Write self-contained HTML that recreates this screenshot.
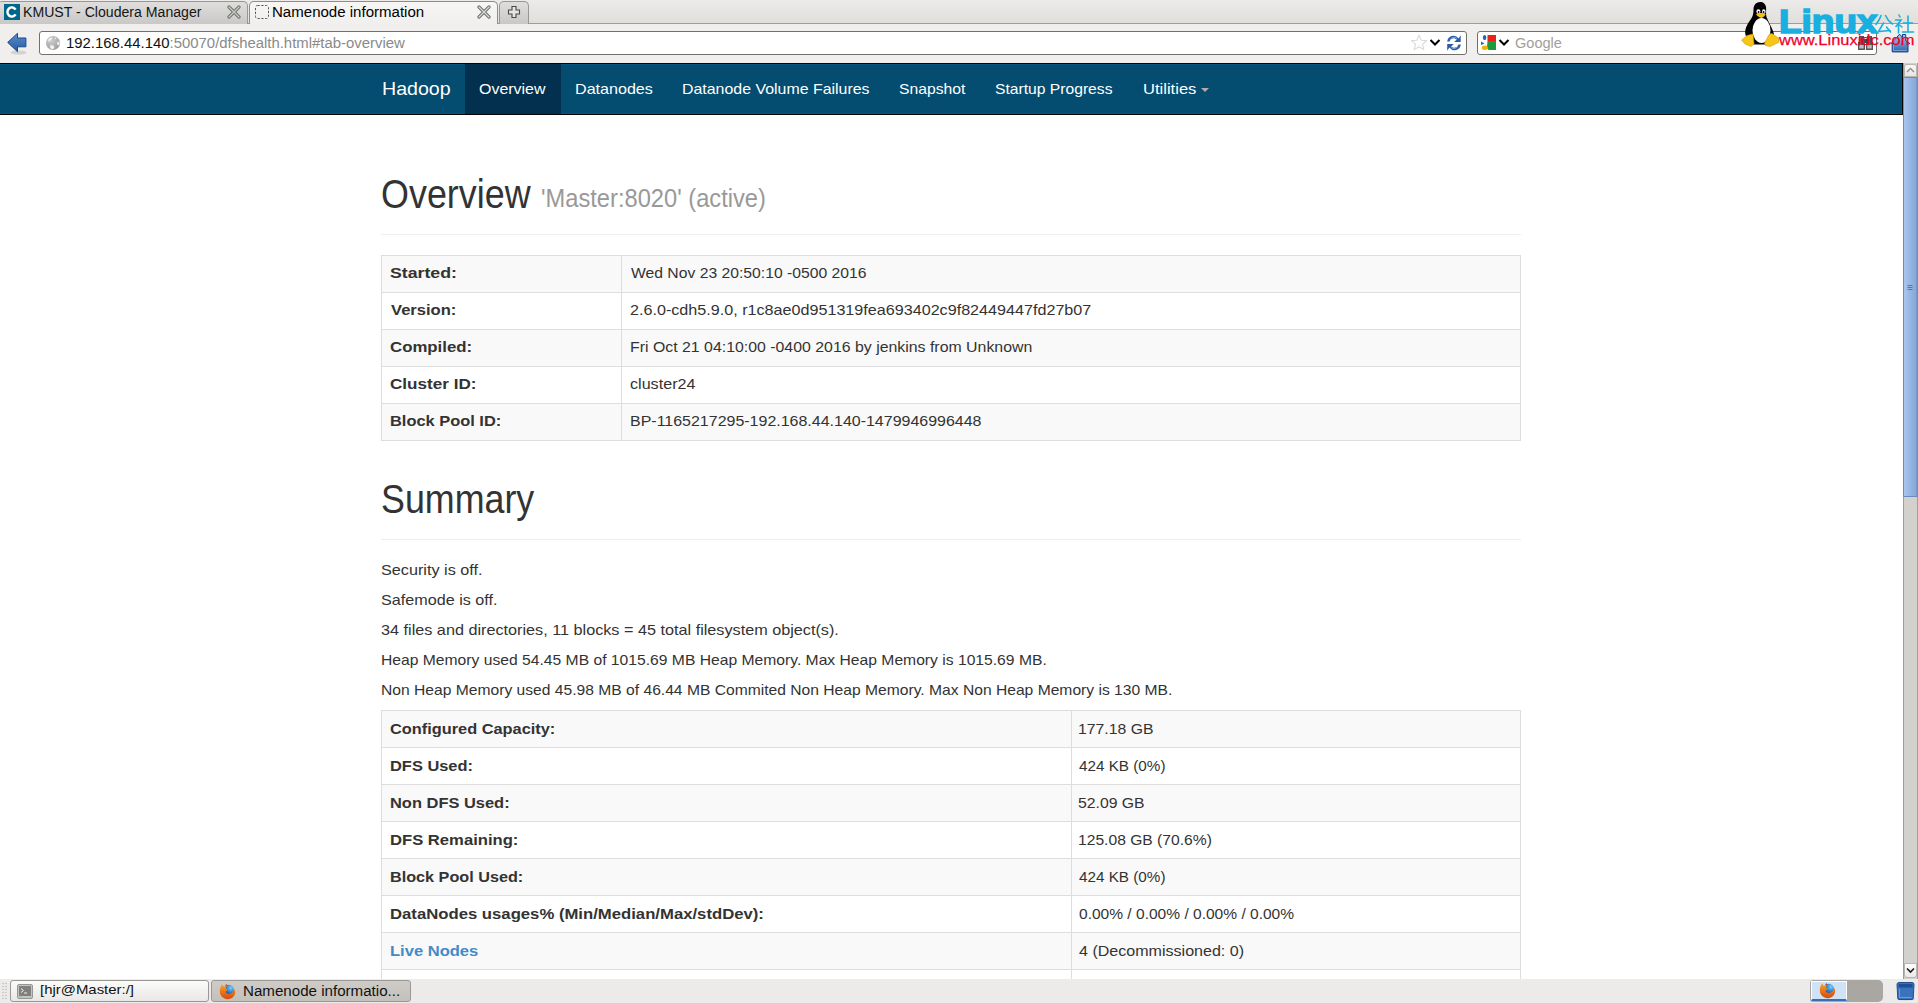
<!DOCTYPE html>
<html><head><meta charset="utf-8">
<style>
*{box-sizing:border-box;margin:0;padding:0}
html,body{width:1918px;height:1003px;overflow:hidden;background:#fff;font-family:"Liberation Sans",sans-serif}
body{position:relative}
.a{position:absolute}
.t{position:absolute;white-space:nowrap;line-height:20px;transform-origin:0 0}
/* chrome */
#tabstrip{left:0;top:0;width:1918px;height:24px;background:linear-gradient(#ecebe9,#e1dfdc);border-bottom:1px solid #9f9d9a}
.tab{position:absolute;border:1px solid #999793;border-bottom:none;border-radius:5px 5px 0 0}
#tab1{left:-3px;top:1px;width:251px;height:23px;background:linear-gradient(#dfdedc,#c9c8c6)}
#tab2{left:249px;top:1px;width:249px;height:24px;background:linear-gradient(#f7f6f5,#f0efee);border-color:#8f8d8a}
#tab3{left:499px;top:1px;width:30px;height:23px;background:linear-gradient(#dfdedc,#c9c8c6)}
#toolbar{left:0;top:24px;width:1918px;height:39px;background:#f0efed}
.box{position:absolute;background:#fff;border:1px solid #72706c;border-radius:3px}
#navbar{left:0;top:63px;width:1903px;height:52px;background:#044c70;border-top:1px solid #050505;border-bottom:1px solid #050505;border-right:1px solid #050505;box-shadow:inset 0 1px #04557f,inset 0 -1px #04557f}
#active{left:465px;top:64px;width:96px;height:50px;background:#02304e}
.hr{position:absolute;left:381px;width:1140px;height:1px;background:#eee}
table{position:absolute;left:381px;width:1140px;border-collapse:collapse;table-layout:fixed}
td{border:1px solid #ddd;height:37px;padding:0}
tr.o td{background:#f9f9f9}
#sb{left:1903px;top:63px;width:15px;height:916px;background:#d3d1ce;border-left:1px solid #a19e9a;border-right:1px solid #a19e9a}
#thumb{left:1903px;top:77px;width:15px;height:420px;background:linear-gradient(90deg,#6a8cbc 0,#6a8cbc 1px,#a9c6ec 1px,#9ab9e4 40%,#86a9da 85%,#6d8fbe 14px);border-top:1px solid #6a8cbc;border-bottom:1px solid #6a8cbc;border-radius:1px}
#taskbar{left:0;top:979px;width:1918px;height:24px;background:#ecebe9}
.tbtn{position:absolute;top:980px;height:22px;border:1px solid #9a9894;border-radius:3px}
</style></head><body>
<div id="tabstrip" class="a"></div>
<div id="tab1" class="tab"></div>
<div id="tab2" class="tab"></div>
<div id="tab3" class="tab"></div>
<div id="toolbar" class="a"></div>
<div class="box" style="left:39px;top:31px;width:1428px;height:24px"></div>
<div class="box" style="left:1477px;top:31px;width:400px;height:24px"></div>

<div id="navbar" class="a"></div>
<div id="active" class="a"></div>
<!-- cloudera icon -->
<svg class="a" style="left:4px;top:4px" width="16" height="16" viewBox="0 0 16 16"><rect width="16" height="16" fill="#00678a"/><path d="M11.6 5.6 A4.4 4.6 0 1 0 11.6 10.4" fill="none" stroke="#fff" stroke-width="2.4"/></svg>
<!-- close x tab1 -->
<svg class="a" style="left:227px;top:5px" width="14" height="14" viewBox="0 0 14 14"><path d="M2 2 L12 12 M12 2 L2 12" stroke="#6f736e" stroke-width="3.2" stroke-linecap="round"/><path d="M2 2 L12 12 M12 2 L2 12" stroke="#c9ccc7" stroke-width="1.2" stroke-linecap="round"/></svg>
<!-- dashed square tab2 -->
<svg class="a" style="left:254px;top:4px" width="16" height="16" viewBox="0 0 16 16"><rect x="1.5" y="1.5" width="13" height="13" rx="2" fill="none" stroke="#555" stroke-width="1" stroke-dasharray="2.2 1.6"/></svg>
<!-- close x tab2 -->
<svg class="a" style="left:477px;top:5px" width="14" height="14" viewBox="0 0 14 14"><path d="M2 2 L12 12 M12 2 L2 12" stroke="#6f736e" stroke-width="3.2" stroke-linecap="round"/><path d="M2 2 L12 12 M12 2 L2 12" stroke="#d7d9d5" stroke-width="1.2" stroke-linecap="round"/></svg>
<!-- plus -->
<svg class="a" style="left:507px;top:5px" width="14" height="14" viewBox="0 0 14 14"><path d="M5 1.5 H9 V5 H12.5 V9 H9 V12.5 H5 V9 H1.5 V5 H5 Z" fill="#e4e4e2" stroke="#484848" stroke-width="1.1"/></svg>
<!-- back arrow -->
<svg class="a" style="left:6px;top:32px" width="24" height="24" viewBox="0 0 24 24"><ellipse cx="12.5" cy="20.5" rx="8" ry="2" fill="#000" opacity="0.12"/><path d="M1.7 10.4 L11.5 1.3 V6 H19.9 V14.8 H11.5 V19.7 Z" fill="url(#ag)" stroke="#19488e" stroke-width="1"/><defs><linearGradient id="ag" x1="0" y1="0" x2="0" y2="1"><stop offset="0" stop-color="#5d8fca"/><stop offset="1" stop-color="#2659a2"/></linearGradient></defs></svg>
<!-- globe -->
<svg class="a" style="left:45px;top:35px" width="16" height="16" viewBox="0 0 16 16"><defs><radialGradient id="gl" cx="0.35" cy="0.3" r="0.8"><stop offset="0" stop-color="#d0d0d0"/><stop offset="1" stop-color="#9a9a9a"/></radialGradient></defs><circle cx="8" cy="8" r="7" fill="url(#gl)"/><path d="M3.2 4.2 L6.5 2.2 L7.2 3.2 L5.5 5.5 L3.5 6.8 Z M9.5 2.5 L11.5 3 L10.5 4.5 Z M12.5 6.2 L14.6 7.5 L13.8 10.5 L12.2 9.5 Z M5.5 10 L8.5 10.5 L9.5 13 L7 14.5 L5 12.5 Z" fill="#f2f2f2"/></svg>
<!-- star -->
<svg class="a" style="left:1410px;top:34px" width="18" height="17" viewBox="0 0 18 17"><path d="M9 1.2 L11.2 6.2 L16.6 6.6 L12.5 10.1 L13.8 15.6 L9 12.7 L4.2 15.6 L5.5 10.1 L1.4 6.6 L6.8 6.2 Z" fill="#fff" stroke="#d9d9d9" stroke-width="1.1" stroke-linejoin="round"/></svg>
<!-- chevrons -->
<svg class="a" style="left:1429px;top:38px" width="12" height="9" viewBox="0 0 12 9"><path d="M1.5 2 L6 6.5 L10.5 2" fill="none" stroke="#000" stroke-width="2"/></svg>
<svg class="a" style="left:1498px;top:38px" width="12" height="9" viewBox="0 0 12 9"><path d="M1.5 2 L6 6.5 L10.5 2" fill="none" stroke="#000" stroke-width="2"/></svg>
<!-- refresh -->
<svg class="a" style="left:1446px;top:34px" width="16" height="18" viewBox="0 0 16 18"><path d="M1.2 7.5 A6.3 6.3 0 0 1 12.6 4.5 L14.7 1.3 V8 H8.2 L10.8 5.6 A4.3 4.3 0 0 0 3.6 7.5 Z" fill="#2a5ca4"/><path d="M14.8 10.5 A6.3 6.3 0 0 1 3.4 13.5 L1.2 16.8 V10 H7.8 L5.2 12.4 A4.3 4.3 0 0 0 12.4 10.5 Z" fill="#2a5ca4"/><path d="M4 6 A4.5 4.5 0 0 1 11 4.5" stroke="#9fc0e8" stroke-width="1" fill="none" opacity="0.7"/><path d="M12 12 A4.5 4.5 0 0 1 5 13.5" stroke="#9fc0e8" stroke-width="1" fill="none" opacity="0.7"/></svg>
<!-- google icon -->
<svg class="a" style="left:1480px;top:34px" width="18" height="18" viewBox="0 0 18 18"><rect x="7.5" y="1" width="8.5" height="6" fill="#e8211a"/><path d="M7.5 7 H16 V16 H9.5 Q7 16 7 13 Z" fill="#1d9a3c"/><ellipse cx="4.6" cy="3.6" rx="1.7" ry="2.6" fill="#1a62cc"/><path d="M1 7.5 L4.5 9.5 L1 11 Z" fill="#1a62cc"/><ellipse cx="4.8" cy="13.8" rx="3" ry="2.2" fill="#f0b400"/></svg>
<!-- binoculars -->
<svg class="a" style="left:1857px;top:34px" width="18" height="18" viewBox="0 0 18 18"><rect x="2" y="2" width="5" height="6" fill="#505050"/><rect x="10" y="2" width="5" height="6" fill="#505050"/><rect x="1" y="8" width="7" height="8" fill="#555" /><rect x="9" y="8" width="7" height="8" fill="#555"/><rect x="2.3" y="11" width="4.4" height="3.5" fill="#bdbdbd"/><rect x="10.3" y="11" width="4.4" height="3.5" fill="#bdbdbd"/><rect x="7" y="5" width="3" height="4" fill="#444"/></svg>
<!-- caret utilities -->
<svg class="a" style="left:1201px;top:88px" width="8" height="4" viewBox="0 0 8 4"><path d="M0 0 H8 L4 4 Z" fill="#b5aca8"/></svg>


<div class="hr" style="top:234px"></div>
<table style="top:255px">
<colgroup><col style="width:240px"><col></colgroup>
<tr class="o"><td></td><td></td></tr><tr><td></td><td></td></tr><tr class="o"><td></td><td></td></tr><tr><td></td><td></td></tr><tr class="o"><td></td><td></td></tr>
</table>
<div class="hr" style="top:539px"></div>
<table style="top:710px">
<colgroup><col style="width:690px"><col></colgroup>
<tr class="o"><td></td><td></td></tr><tr><td></td><td></td></tr><tr class="o"><td></td><td></td></tr><tr><td></td><td></td></tr><tr class="o"><td></td><td></td></tr><tr><td></td><td></td></tr><tr class="o"><td></td><td></td></tr><tr><td></td><td></td></tr>
</table>
<!--HEADINGS-->
<div id="taskbar" class="a"></div>
<div class="tbtn" style="left:10px;width:199px;background:linear-gradient(#fbfbfa,#e9e8e6)"></div>
<div class="tbtn" style="left:211px;width:200px;background:linear-gradient(#cfccc8,#c4c1bd)"></div>
<div id="sb" class="a"></div>
<div id="thumb" class="a"></div>
<div class="t" id="tab1t" style="left:22.99px;top:2.00px;font-size:14px;color:#151515;transform:scale(1.0074,1.000)">KMUST - Cloudera Manager</div>
<div class="t" id="tab2t" style="left:272.15px;top:2.00px;font-size:14px;color:#000;transform:scale(1.0745,1.000)">Namenode information</div>
<div class="t" id="url" style="left:65.74px;top:33.00px;font-size:14px;color:#111;transform:scale(1.0641,1.000)">192.168.44.140<span style="color:#8a8a8a">:50070/dfshealth.html#tab-overview</span></div>
<div class="t" id="google" style="left:1514.99px;top:33.00px;font-size:14px;color:#a29e9a;transform:scale(1.0388,1.000)">Google</div>
<div class="t" id="brand" style="left:381.95px;top:79.00px;font-size:19px;color:#fff;transform:scale(1.0308,1.000)">Hadoop</div>
<div class="t" id="nav1" style="left:479.17px;top:79.00px;font-size:15px;color:#fff;transform:scale(1.0632,1.000)">Overview</div>
<div class="t" id="nav2" style="left:575.08px;top:79.00px;font-size:15px;color:#fff;transform:scale(1.0733,1.000)">Datanodes</div>
<div class="t" id="nav3" style="left:682.10px;top:79.00px;font-size:15px;color:#fff;transform:scale(1.0608,1.000)">Datanode Volume Failures</div>
<div class="t" id="nav4" style="left:899.37px;top:79.00px;font-size:15px;color:#fff;transform:scale(1.0476,1.000)">Snapshot</div>
<div class="t" id="nav5" style="left:995.15px;top:79.00px;font-size:15px;color:#fff;transform:scale(1.0438,1.000)">Startup Progress</div>
<div class="t" id="nav6" style="left:1142.52px;top:79.00px;font-size:15px;color:#fff;transform:scale(1.1046,1.000)">Utilities</div>
<div class="t" id="t1k0" style="left:389.95px;top:263.00px;font-size:15.5px;font-weight:bold;color:#333;transform:scale(1.1423,1.000)">Started:</div>
<div class="t" id="t1v0" style="left:630.97px;top:263.00px;font-size:15px;color:#333;transform:scale(1.0469,1.000)">Wed Nov 23 20:50:10 -0500 2016</div>
<div class="t" id="t1k1" style="left:390.96px;top:300.00px;font-size:15.5px;font-weight:bold;color:#333;transform:scale(1.0685,1.000)">Version:</div>
<div class="t" id="t1v1" style="left:629.96px;top:300.00px;font-size:15px;color:#333;transform:scale(1.0760,1.000)">2.6.0-cdh5.9.0, r1c8ae0d951319fea693402c9f82449447fd27b07</div>
<div class="t" id="t1k2" style="left:389.97px;top:337.00px;font-size:15.5px;font-weight:bold;color:#333;transform:scale(1.0841,1.000)">Compiled:</div>
<div class="t" id="t1v2" style="left:629.91px;top:337.00px;font-size:15px;color:#333;transform:scale(1.0580,1.000)">Fri Oct 21 04:10:00 -0400 2016 by jenkins from Unknown</div>
<div class="t" id="t1k3" style="left:389.94px;top:374.00px;font-size:15.5px;font-weight:bold;color:#333;transform:scale(1.1029,1.000)">Cluster ID:</div>
<div class="t" id="t1v3" style="left:629.93px;top:374.00px;font-size:15px;color:#333;transform:scale(1.0753,1.000)">cluster24</div>
<div class="t" id="t1k4" style="left:389.97px;top:411.00px;font-size:15.5px;font-weight:bold;color:#333;transform:scale(1.0588,1.000)">Block Pool ID:</div>
<div class="t" id="t1v4" style="left:629.90px;top:411.00px;font-size:15px;color:#333;transform:scale(1.0650,1.000)">BP-1165217295-192.168.44.140-1479946996448</div>
<div class="t" id="p0" style="left:380.55px;top:560.00px;font-size:15px;color:#333;transform:scale(1.0806,1.000)">Security is off.</div>
<div class="t" id="p1" style="left:380.53px;top:590.00px;font-size:15px;color:#333;transform:scale(1.0773,1.000)">Safemode is off.</div>
<div class="t" id="p2" style="left:380.54px;top:620.00px;font-size:15px;color:#333;transform:scale(1.0807,1.000)">34 files and directories, 11 blocks = 45 total filesystem object(s).</div>
<div class="t" id="p3" style="left:380.57px;top:650.00px;font-size:15px;color:#333;transform:scale(1.0443,1.000)">Heap Memory used 54.45 MB of 1015.69 MB Heap Memory. Max Heap Memory is 1015.69 MB.</div>
<div class="t" id="p4" style="left:380.57px;top:680.00px;font-size:15px;color:#333;transform:scale(1.0423,1.000)">Non Heap Memory used 45.98 MB of 46.44 MB Commited Non Heap Memory. Max Non Heap Memory is 130 MB.</div>
<div class="t" id="t2k0" style="left:389.98px;top:719.00px;font-size:15.5px;font-weight:bold;color:#333;transform:scale(1.0542,1.000)">Configured Capacity:</div>
<div class="t" id="t2v0" style="left:1078.32px;top:719.00px;font-size:15px;color:#333;transform:scale(1.0516,1.000)">177.18 GB</div>
<div class="t" id="t2k1" style="left:389.99px;top:756.00px;font-size:15.5px;font-weight:bold;color:#333;transform:scale(1.0588,1.000)">DFS Used:</div>
<div class="t" id="t2v1" style="left:1079.39px;top:756.00px;font-size:15px;color:#333;transform:scale(1.0170,1.000)">424 KB (0%)</div>
<div class="t" id="t2k2" style="left:389.97px;top:793.00px;font-size:15.5px;font-weight:bold;color:#333;transform:scale(1.0604,1.000)">Non DFS Used:</div>
<div class="t" id="t2v2" style="left:1078.35px;top:793.00px;font-size:15px;color:#333;transform:scale(1.0515,1.000)">52.09 GB</div>
<div class="t" id="t2k3" style="left:389.96px;top:830.00px;font-size:15.5px;font-weight:bold;color:#333;transform:scale(1.0723,1.000)">DFS Remaining:</div>
<div class="t" id="t2v3" style="left:1078.36px;top:830.00px;font-size:15px;color:#333;transform:scale(1.0426,1.000)">125.08 GB (70.6%)</div>
<div class="t" id="t2k4" style="left:389.98px;top:867.00px;font-size:15.5px;font-weight:bold;color:#333;transform:scale(1.0453,1.000)">Block Pool Used:</div>
<div class="t" id="t2v4" style="left:1079.39px;top:867.00px;font-size:15px;color:#333;transform:scale(1.0170,1.000)">424 KB (0%)</div>
<div class="t" id="t2k5" style="left:389.96px;top:904.00px;font-size:15.5px;font-weight:bold;color:#333;transform:scale(1.0772,1.000)">DataNodes usages% (Min/Median/Max/stdDev):</div>
<div class="t" id="t2v5" style="left:1079.39px;top:904.00px;font-size:15px;color:#333;transform:scale(1.0358,1.000)">0.00% / 0.00% / 0.00% / 0.00%</div>
<div class="t" id="t2k6" style="left:389.91px;top:941.00px;font-size:15.5px;font-weight:bold;color:#428bca;transform:scale(1.0669,1.000)">Live Nodes</div>
<div class="t" id="t2v6" style="left:1079.39px;top:941.00px;font-size:15px;color:#333;transform:scale(1.0702,1.000)">4 (Decommissioned: 0)</div>
<div class="t" id="tb1" style="left:40.45px;top:980.00px;font-size:13px;color:#111;transform:scale(1.1485,1.000)">[hjr@Master:/]</div>
<div class="t" id="tb2" style="left:242.96px;top:981.00px;font-size:14px;color:#111;transform:scale(1.0799,1.000)">Namenode informatio...</div>
<div class="t" id="h1o" style="left:380.52px;top:184.00px;font-size:36px;color:#333;transform:scale(0.9974,1.110)">Overview</div>
<div class="t" id="h1s" style="left:541.02px;top:188.00px;font-size:24px;color:#999;transform:scale(0.9867,1.040)">'Master:8020' (active)</div>
<div class="t" id="h1m" style="left:380.51px;top:488.50px;font-size:36px;color:#333;transform:scale(0.9949,1.110)">Summary</div>
<div class="a" style="left:1810px;top:980px;width:73px;height:22px;background:#aaa6a2;border-radius:3px 5px 5px 3px"></div>
<div class="a" style="left:1811px;top:981px;width:36px;height:20px;background:#d0e2f6;border:1px solid #fff;border-bottom:2px solid #3b6fb5"></div>
<!-- scrollbar buttons -->
<div class="a" style="left:1904px;top:64px;width:13px;height:13px;border:1px solid #b9b6b2;border-radius:3px 3px 0 0;background:linear-gradient(#fafaf9,#e6e5e3)"></div>
<svg class="a" style="left:1905px;top:66px" width="11" height="8" viewBox="0 0 11 8"><path d="M2 6 L5.5 2.5 L9 6" fill="none" stroke="#8f8c88" stroke-width="1.3"/></svg>
<div class="a" style="left:1904px;top:963px;width:13px;height:15px;border:1px solid #b9b6b2;border-radius:0 0 3px 3px;background:linear-gradient(#fdfdfd,#ebeae8)"></div>
<svg class="a" style="left:1905px;top:966px" width="11" height="9" viewBox="0 0 11 9"><path d="M2 2.5 L5.5 6 L9 2.5" fill="none" stroke="#1a1a1a" stroke-width="1.6"/></svg>
<svg class="a" style="left:1906px;top:284px" width="8" height="7" viewBox="0 0 8 7"><path d="M1.5 1.5 H6.5 M1.5 3.5 H6.5 M1.5 5.5 H6.5" stroke="#4f6f9c" stroke-width="0.9"/></svg>
<!-- home -->
<svg class="a" style="left:1890px;top:33px" width="21" height="20" viewBox="0 0 21 20"><ellipse cx="10.5" cy="19" rx="9" ry="1.2" fill="#000" opacity="0.12"/><path d="M1 10.6 L9.6 1.2 L12.5 4.2 V1.5 H15.7 V7.6 L20 10.6 H18 V18.8 H2.2 V10.6 Z" fill="url(#hg)" stroke="#123f8c" stroke-width="1"/><path d="M3.5 11 V17.5 H16.8" stroke="#8fb4e4" stroke-width="0.7" fill="none"/><defs><linearGradient id="hg" x1="0" y1="0" x2="0" y2="1"><stop offset="0" stop-color="#a9c8ee"/><stop offset="1" stop-color="#2f64ad"/></linearGradient></defs></svg>
<!-- penguin -->
<svg class="a" style="left:1736px;top:0px" width="50" height="50" viewBox="0 0 50 50">
<path d="M24.5 2 C20 2 17.5 5 17.5 9.5 C17.5 13 17 16 15 19 C11.5 24 9 28 9.2 33 C9.3 36 11 38 13 39.5 L17 44.5 L32 44.5 L36 40 C38 37 38.5 34 37 31 C35.5 27 32.5 22 30.5 17 C29.5 14 30.5 10 30 7 C29.5 4 27.5 2 24.5 2 Z" fill="#000"/>
<ellipse cx="25.5" cy="30.5" rx="9" ry="12.5" fill="#fff"/>
<ellipse cx="22.4" cy="11.5" rx="2" ry="2.3" fill="#fff"/><ellipse cx="27.8" cy="11.5" rx="1.8" ry="2.2" fill="#fff"/>
<circle cx="22.6" cy="12" r="0.9" fill="#000"/><circle cx="27.6" cy="12" r="0.9" fill="#000"/>
<path d="M20 14.3 C22 12.8 27 12.6 29.6 14.3 C28.5 16.5 27 17.8 25.5 18 C23.5 17.8 21.5 16.5 20 14.3 Z" fill="#f2c010"/>
<path d="M5.5 40 L11 35.5 L17 34 L18 44 L15 46.5 L9 44 Z" fill="#f5c518" stroke="#d89c00" stroke-width="0.6"/>
<path d="M28.5 43 L33.5 34 L36 33.5 L43 38.5 L42.5 42.5 L34 46.5 L29.5 45.5 Z" fill="#f5c518" stroke="#d89c00" stroke-width="0.6"/>
</svg>
<div class="a" id="lnx" style="left:1779px;top:2px;font-size:33px;font-weight:bold;color:#19b0e0;line-height:40px;white-space:nowrap;transform:scale(1.12,1.0);transform-origin:0 0;-webkit-text-stroke:1.6px #19b0e0">Linux</div>
<svg class="a" style="left:1875px;top:14px" width="40" height="20" viewBox="0 0 40 20" fill="none" stroke="#19b0e0" stroke-width="1.6" stroke-linecap="round">
<path d="M6 1.5 C5 5 3 8 1 10.5"/><path d="M10.5 1.5 C12 5 14.5 8 17.5 10"/><path d="M8.5 9 L3.5 17.5 L15 16.5"/><path d="M11.5 13 L15.5 18"/>
<path d="M24 1 L25 3"/><path d="M20.5 6 H26 L21 12.5"/><path d="M23.5 9.5 V19"/><path d="M24.5 11 L27 13"/>
<path d="M28.5 9 H37.5"/><path d="M33 2 V17.5"/><path d="M27.5 18 H38.5"/>
</svg>
<div class="a" style="left:1779px;top:31px;font-size:15.5px;color:#f0002a;line-height:18px;white-space:nowrap;transform:scaleX(1.062);transform-origin:0 0;-webkit-text-stroke:0.25px #f0002a">www.Linuxidc.com</div>
<!-- taskbar bits -->
<svg class="a" style="left:1px;top:982px" width="7" height="18" viewBox="0 0 7 18"><g fill="#b5b2ae"><circle cx="2" cy="1.5" r="0.7"/><circle cx="5" cy="1.5" r="0.7"/><circle cx="2" cy="4.5" r="0.7"/><circle cx="5" cy="4.5" r="0.7"/><circle cx="2" cy="7.5" r="0.7"/><circle cx="5" cy="7.5" r="0.7"/><circle cx="2" cy="10.5" r="0.7"/><circle cx="5" cy="10.5" r="0.7"/><circle cx="2" cy="13.5" r="0.7"/><circle cx="5" cy="13.5" r="0.7"/><circle cx="2" cy="16.5" r="0.7"/><circle cx="5" cy="16.5" r="0.7"/></g></svg>
<svg class="a" style="left:17px;top:984px" width="16" height="15" viewBox="0 0 16 15"><rect x="0.5" y="0.5" width="15" height="14" rx="1.5" fill="#c4c4c2" stroke="#959593"/><rect x="2" y="2" width="12" height="10" fill="#7f817f"/><path d="M4 4.5 L6.5 6.5 L4 8.5" stroke="#eee" stroke-width="1" fill="none"/><path d="M7 9 H10" stroke="#eee" stroke-width="1"/><rect x="2.5" y="11.5" width="2" height="1" fill="#5fc35f"/></svg>
<svg class="a" style="left:219px;top:983px" width="17" height="17" viewBox="0 0 17 17"><defs><radialGradient id="fg1" cx="0.7" cy="0.3" r="0.8"><stop offset="0" stop-color="#7fd0f5"/><stop offset="0.5" stop-color="#2f86d2"/><stop offset="1" stop-color="#1c3f8e"/></radialGradient><linearGradient id="fo1" x1="0" y1="0" x2="0" y2="1"><stop offset="0" stop-color="#f5a623"/><stop offset="1" stop-color="#d9480f"/></linearGradient></defs><circle cx="9.8" cy="7" r="5.2" fill="url(#fg1)"/><path d="M3.2 1.2 C1.8 3 0.8 5.5 0.8 8.3 C0.8 12.8 4.5 16.2 8.8 16.2 C13 16.2 16.2 13 16.2 8.8 C16 7.5 15.6 6.5 15 5.8 C14.5 9 12.5 11 10 11 C8 11 6.8 9.8 6.6 8.5 C7.5 8.2 8.3 7.4 8.6 6.4 C7.5 6.4 6.8 5.6 7 4.6 C8 3.6 7.8 2.8 7.6 2 C6.5 2.6 5.8 3.4 5.4 4 C4.5 3.4 3.8 2.5 3.2 1.2 Z" fill="url(#fo1)"/><path d="M6 2.2 L8 1 L7.6 3.5 Z" fill="#c2410c"/></svg>
<svg class="a" style="left:1819px;top:982px" width="17" height="17" viewBox="0 0 17 17"><defs><radialGradient id="fg2" cx="0.7" cy="0.3" r="0.8"><stop offset="0" stop-color="#7fd0f5"/><stop offset="0.5" stop-color="#2f86d2"/><stop offset="1" stop-color="#1c3f8e"/></radialGradient><linearGradient id="fo2" x1="0" y1="0" x2="0" y2="1"><stop offset="0" stop-color="#f5a623"/><stop offset="1" stop-color="#d9480f"/></linearGradient></defs><circle cx="9.8" cy="7" r="5.2" fill="url(#fg2)"/><path d="M3.2 1.2 C1.8 3 0.8 5.5 0.8 8.3 C0.8 12.8 4.5 16.2 8.8 16.2 C13 16.2 16.2 13 16.2 8.8 C16 7.5 15.6 6.5 15 5.8 C14.5 9 12.5 11 10 11 C8 11 6.8 9.8 6.6 8.5 C7.5 8.2 8.3 7.4 8.6 6.4 C7.5 6.4 6.8 5.6 7 4.6 C8 3.6 7.8 2.8 7.6 2 C6.5 2.6 5.8 3.4 5.4 4 C4.5 3.4 3.8 2.5 3.2 1.2 Z" fill="url(#fo2)"/><path d="M6 2.2 L8 1 L7.6 3.5 Z" fill="#c2410c"/></svg>
<!-- trash -->
<svg class="a" style="left:1895px;top:981px" width="21" height="20" viewBox="0 0 21 20"><ellipse cx="11" cy="18" rx="9" ry="1.5" fill="#000" opacity="0.15"/><path d="M2 3.5 Q2 1.5 4 1.5 H17 Q19 1.5 19 3.5 L18.2 17.5 Q18 18.5 17 18.5 H4 Q3 18.5 2.8 17.5 Z" fill="#3a72bd" stroke="#1c4f96" stroke-width="1"/><path d="M3.5 3 H17.5 V6.5 H3.5 Z" fill="#1e4f8e"/><path d="M4.5 8 V16.5 H16.5" stroke="#7aa6dc" stroke-width="0.8" fill="none"/></svg>

</body></html>
